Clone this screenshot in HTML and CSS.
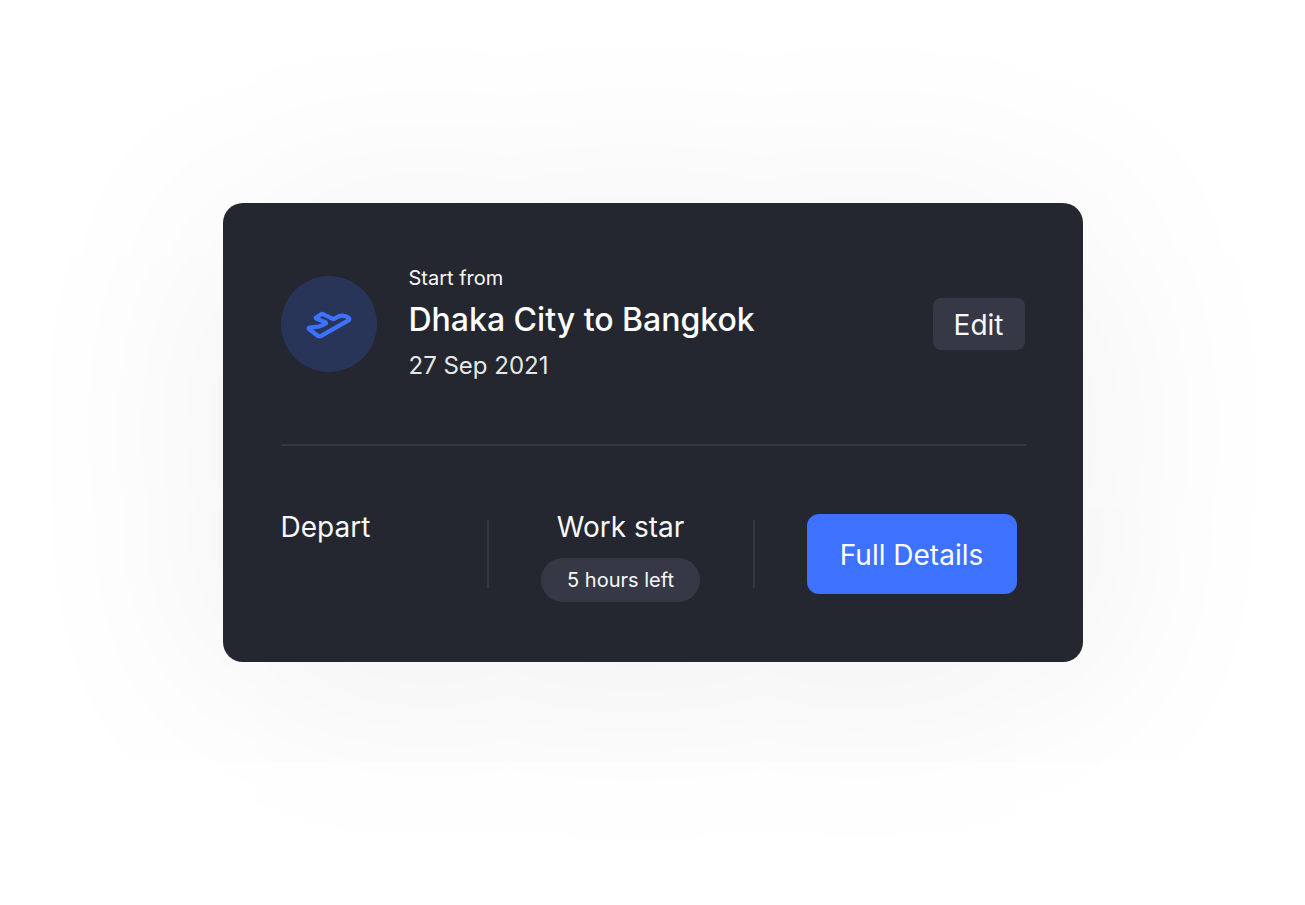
FILE: index.html
```html
<!DOCTYPE html>
<html lang="en">
<head>
<meta charset="utf-8">
<meta name="viewport" content="width=device-width, initial-scale=1">
<title>Trip card</title>
<link rel="stylesheet" href="styles.css">
</head>
<body>
<main class="page">
  <article class="card">
    <header class="trip">
      <div class="trip-icon">
        <svg viewBox="0 0 288 288" aria-hidden="true">
          <path d="M105 125 L122 114 Q124 113 127 115 L154 128 Q157 130 160 128 C171 121 176 118 185 119 Q194 120 201 124 Q208 129 202 133 L122 179 Q114 183 107 177 L84 159 Q80 155 87 155 L111 152 Q116 151 120 149 L132 144 Q138 141 132 138 L107 128 Q103 126 105 125 Z"/>
        </svg>
      </div>
      <div class="trip-text">
        <p class="trip-label">Start from</p>
        <h1 class="trip-title">Dhaka City to Bangkok</h1>
        <time class="trip-date" datetime="2021-09-27">27 Sep 2021</time>
      </div>
      <button class="edit" type="button">Edit</button>
    </header>
    <hr class="rule">
    <footer class="details">
      <p class="detail-title">Depart</p>
      <div class="separator"></div>
      <div class="work">
        <p class="detail-title">Work star</p>
        <span class="pill">5 hours left</span>
      </div>
      <div class="separator"></div>
      <div class="action">
        <button class="full-details" type="button">Full Details</button>
      </div>
    </footer>
  </article>
</main>
</body>
</html>
```
FILE: styles.css
```css
* {
  box-sizing: border-box;
}

body,
p,
h1 {
  margin: 0;
}

body {
  background: #fff;
  color: #f8f8f8;
  font-family: Inter, "Liberation Sans", sans-serif;
  font-weight: 420;
}

button {
  border: 0;
  color: inherit;
  font: inherit;
  cursor: pointer;
}

.page {
  display: flex;
  align-items: center;
  justify-content: center;
  min-height: 100vh;
  padding: 0 16px 40px;
}

.card {
  width: 100%;
  max-width: 860px;
  padding: 61px 56px 60px 58px;
  border-radius: 20px;
  background: #24272f;
  box-shadow: 0 20px 220px rgba(0, 0, 0, 0.08);
}

.trip {
  display: flex;
  align-items: center;
  gap: 32px;
  padding-right: 2px;
}

.trip-icon {
  flex: none;
  width: 96px;
  height: 96px;
  border-radius: 50%;
  background: #293558;
}

.trip-icon svg {
  display: block;
  fill: none;
  stroke: #3c72ff;
  stroke-width: 13;
  stroke-linejoin: round;
}

.trip-text {
  display: flex;
  flex: 1;
  flex-direction: column;
  gap: 8px;
}

.trip-label {
  font-size: 20px;
  line-height: 28px;
}

.trip-title {
  color: #fff;
  font-size: 32px;
  font-weight: 450;
  line-height: 40px;
}

.trip-date {
  color: #e6e7e9;
  font-size: 24px;
  line-height: 36px;
}

.edit {
  padding: 10px 21px 8px;
  border-radius: 8px;
  background: #363945;
  font-size: 28px;
  line-height: 34px;
}

.rule {
  height: 2px;
  margin: 60px 0 64px;
  border: 0;
  background: #343741;
}

.details {
  display: grid;
  grid-template-columns: 206fr 2px 264fr 2px 272fr;
}

.detail-title {
  font-size: 28px;
  line-height: 34px;
}

.separator {
  height: 68px;
  margin-top: 10px;
  background: #343741;
}

.work {
  display: flex;
  flex-direction: column;
  align-items: center;
  gap: 14px;
}

.pill {
  padding: 8px 26px;
  border-radius: 22px;
  background: #363945;
  font-size: 20px;
  line-height: 28px;
}

.action {
  padding: 4px 10px 0 52px;
}

.full-details {
  width: 100%;
  padding: 24px 0 22px;
  border-radius: 12px;
  background: #3c72ff;
  color: #fff;
  font-size: 28px;
  line-height: 34px;
  white-space: nowrap;
}
```
